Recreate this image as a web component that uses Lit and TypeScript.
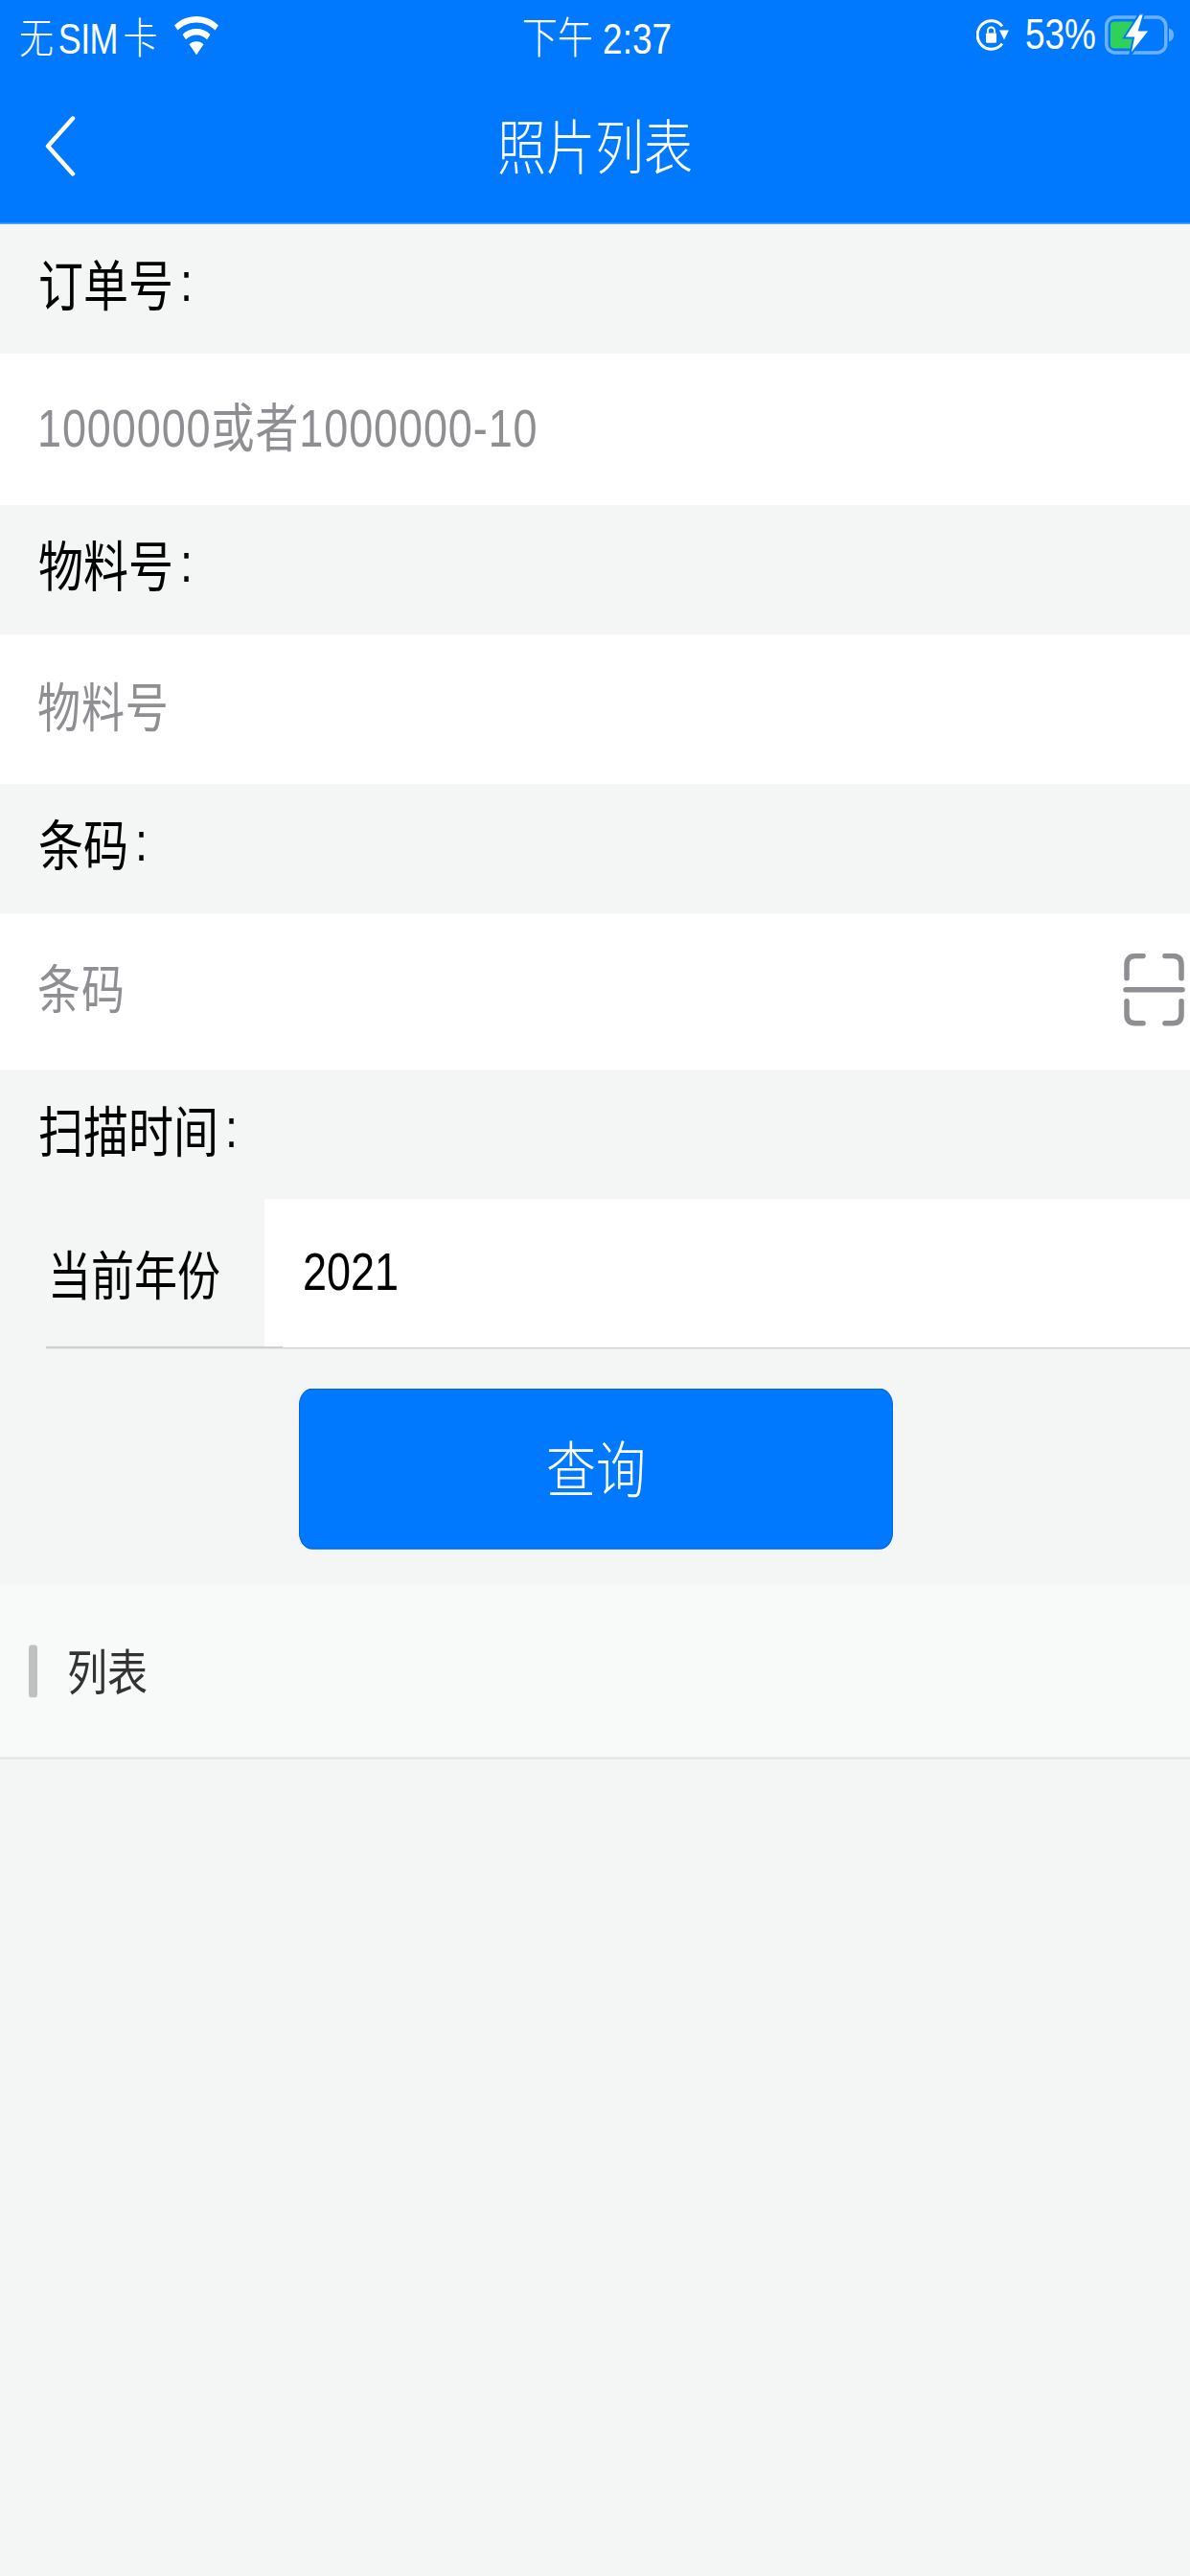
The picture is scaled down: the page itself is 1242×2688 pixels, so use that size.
import {LitElement, css, html} from 'lit';
import {customElement} from 'lit/decorators.js';

// The reference is a 1242x2208 screen stretched to 2688 tall, so the page is
// laid out at 2208 and stretched once as a whole.
@customElement('app-root')
export class AppRoot extends LitElement {
  static styles = css`
    :host {
      display: block;
      width: 1242px;
      height: 2688px;
      background: #f4f6f6;
      font-family: 'Liberation Sans', 'Noto Sans CJK SC', sans-serif;
      color: #000;
      overflow: hidden;
    }
    .page {
      width: 1242px;
      height: 2208px;
      transform: scaleY(1.2174);
      transform-origin: top left;
    }
    .header {
      background: #0079fe;
      color: #fff;
      height: 192px;
      border-bottom: 1px solid #5da9fe;
      box-sizing: border-box;
    }
    .status {
      height: 60px;
      display: grid;
      grid-template-columns: 1fr auto 1fr;
      align-items: center;
      padding: 0 16px 0 20px;
      font-size: 37px;
      font-weight: 300;
    }
    .status-left,
    .status-right {
      display: flex;
      align-items: center;
    }
    .status-left {
      gap: 18px;
    }
    .status-right {
      justify-content: flex-end;
    }
    .carrier {
      font-size: 36px;
      letter-spacing: -0.6px;
      word-spacing: -4px;
    }
    .lock {
      margin-right: 17px;
    }
    .percent {
      margin-right: 9px;
    }
    .nav {
      height: 131px;
      display: grid;
      grid-template-columns: 1fr auto 1fr;
      align-items: center;
      padding: 0 45px;
      box-sizing: border-box;
    }
    .nav-title {
      font-size: 51px;
      font-weight: 300;
      padding-bottom: 6px;
    }
    svg {
      display: block;
    }
    .label {
      height: 111px;
      display: flex;
      align-items: center;
      padding: 0 0 12px 40px;
      font-size: 47px;
      box-sizing: border-box;
    }
    .colon {
      margin-left: 7px;
    }
    .field {
      height: 130px;
      background: #fff;
      display: flex;
      align-items: center;
      padding-left: 39px;
      box-sizing: border-box;
    }
    .field.code {
      height: 134px;
      padding: 0 5px 3px 39px;
    }
    .field.middle {
      height: 128px;
    }
    input {
      flex: 1;
      min-width: 0;
      border: 0;
      outline: 0;
      padding: 0;
      background: transparent;
      font: inherit;
      font-size: 45px;
      color: #000;
    }
    input::placeholder {
      color: #8e8e93;
      opacity: 1;
      letter-spacing: 0.9px;
    }
    .year-row {
      margin-left: 48px;
      height: 128px;
      display: flex;
      border-bottom: 2px solid #cfcfcf;
      box-sizing: border-box;
    }
    .year-label {
      width: 228px;
      padding: 0 0 2px 2px;
      box-sizing: border-box;
      display: flex;
      align-items: center;
      font-size: 45px;
    }
    .year-box {
      flex: 1;
      background: #fff;
      display: flex;
      align-items: center;
      padding-left: 40px;
    }
    .query-wrap {
      display: flex;
      justify-content: center;
      padding: 34px 0 0 2px;
      height: 202px;
      box-sizing: border-box;
    }
    .query {
      width: 620px;
      height: 138px;
      border: 1px solid #0067d8;
      border-radius: 14px;
      background: #0079fe;
      color: #fff;
      font: inherit;
      font-size: 52px;
      font-weight: 300;
      padding: 0 0 5px;
    }
    .list-head {
      height: 150px;
      background: #f8f9f9;
      border-bottom: 2px solid #e4e6e6;
      box-sizing: border-box;
      display: flex;
      align-items: center;
      padding-left: 30px;
      gap: 31px;
      font-size: 42px;
      color: #333;
    }
    .list-title {
      padding-bottom: 3px;
    }
    .list-bar {
      width: 9px;
      height: 45px;
      border-radius: 3px;
      background: #c0c0c0;
    }
  `;

  private renderStatus() {
    return html`
      <div class="status">
        <div class="status-left">
          <span class="carrier">无 SIM 卡</span>
          <svg width="46" height="33" viewBox="0 0 46 40" preserveAspectRatio="none" fill="#fff">
            <path d="M23 0C14 0 6 3.500 0 9.500L3.500 14.500C8.500 9.500 15.500 6.500 23 6.500C30.500 6.500 37.500 9.500 42.500 14.500L46 9.500C40 3.500 32 0 23 0Z" />
            <path d="M23 13C17.500 13 12.500 15 8.500 18.800L12 24C15 21 18.800 19.300 23 19.300C27.200 19.300 31 21 34 24L37.500 18.800C33.500 15 28.500 13 23 13Z" />
            <path d="M23 26C20 26 17.500 27 15.500 29L23 40L30.500 29C28.500 27 26 26 23 26Z" />
          </svg>
        </div>
        <span>下午 2:37</span>
        <div class="status-right">
          <svg class="lock" width="34" height="30" viewBox="0 0 34 36" preserveAspectRatio="none" fill="none">
            <path d="M27 27A14.500 14.500 0 1 1 27 9" stroke="#fff" stroke-width="3" />
            <path d="M24 13H34L29 23Z" fill="#fff" />
            <path d="M12 16V13.500A3.500 3.500 0 0 1 19 13.500V16" stroke="#fff" stroke-width="2" />
            <rect x="10" y="16" width="11" height="10" rx="1" fill="#fff" />
          </svg>
          <span class="percent">53%</span>
          <svg width="73" height="36" viewBox="0 0 73 44" preserveAspectRatio="none" fill="none">
            <rect x="1.750" y="3.500" width="62" height="37" rx="9" stroke="#6db0fe" stroke-width="3.500" />
            <rect x="6" y="8" width="26" height="28" rx="4" fill="#30d158" />
            <path d="M67 15C70 16 72 18 72 22C72 26 70 28 67 29Z" fill="#6db0fe" />
            <path d="M36 0L20 25H30L26 44L47 17H36L41 0Z" fill="#fff" stroke="#0079fe" stroke-width="2" />
          </svg>
        </div>
      </div>
    `;
  }

  render() {
    return html`
      <div class="page">
        <div class="header">
          ${this.renderStatus()}
          <div class="nav">
            <svg width="34" height="52.500" viewBox="0 0 34 64" preserveAspectRatio="none" fill="none">
              <path d="M31 3L5 32L31 61" stroke="#fff" stroke-width="4.500" stroke-linecap="round" stroke-linejoin="round" />
            </svg>
            <span class="nav-title">照片列表</span>
          </div>
        </div>

        <div class="label">订单号<span class="colon">:</span></div>
        <div class="field"><input placeholder="1000000或者1000000-10" /></div>
        <div class="label">物料号<span class="colon">:</span></div>
        <div class="field middle"><input placeholder="物料号" /></div>
        <div class="label">条码<span class="colon">:</span></div>
        <div class="field code">
          <input placeholder="条码" />
          <svg width="65" height="62.500" viewBox="0 0 65 76" preserveAspectRatio="none" fill="none" stroke="#8e8e93" stroke-width="5.500" stroke-linecap="round">
            <path d="M4 26V12Q4 3 13 3H21" />
            <path d="M44 3H52Q61 3 61 12V26" />
            <path d="M3 38H62" />
            <path d="M4 50V64Q4 73 13 73H21" />
            <path d="M44 73H52Q61 73 61 64V50" />
          </svg>
        </div>
        <div class="label">扫描时间<span class="colon">:</span></div>
        <div class="year-row">
          <div class="year-label">当前年份</div>
          <div class="year-box"><input value="2021" /></div>
        </div>
        <div class="query-wrap"><button class="query">查询</button></div>
        <div class="list-head">
          <span class="list-bar"></span>
          <span class="list-title">列表</span>
        </div>
      </div>
    `;
  }
}
